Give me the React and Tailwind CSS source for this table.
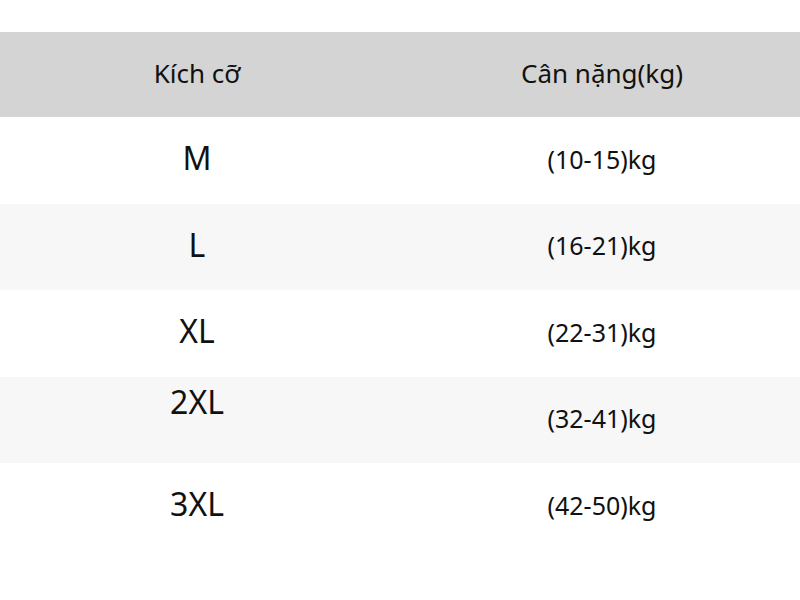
import React from 'react';

const ROWS = [
  { size: 'M', weight: '(10-15)kg' },
  { size: 'L', weight: '(16-21)kg' },
  { size: 'XL', weight: '(22-31)kg' },
  { size: '2XL', weight: '(32-41)kg', lift: true },
  { size: '3XL', weight: '(42-50)kg' },
];

export default function App() {
  return (
    <div
      className="w-[800px] h-[600px] bg-white text-[#111] overflow-hidden"
      style={{ fontFamily: '"Noto Sans", "Open Sans", sans-serif' }}
    >
      <div className="h-[32px]" />
      <div className="grid grid-cols-2 h-[85px] bg-[#d4d4d4] items-center text-center text-[26px] pb-[2px]">
        <div className="pr-[6px]">Kích cỡ</div>
        <div className="pl-[4px]">Cân nặng(kg)</div>
      </div>
      {ROWS.map((r, i) => (
        <div
          key={r.size}
          className={`grid grid-cols-2 h-[86.5px] items-center text-center ${
            i % 2 === 1 ? 'bg-[#f7f7f7]' : 'bg-white'
          }`}
        >
          <div className={`text-[32px] pr-[6px] ${r.lift ? 'pb-[36px]' : 'pb-[4px]'}`}>{r.size}</div>
          <div className="text-[25px] pl-[4px] pb-[2px]">{r.weight}</div>
        </div>
      ))}
    </div>
  );
}
